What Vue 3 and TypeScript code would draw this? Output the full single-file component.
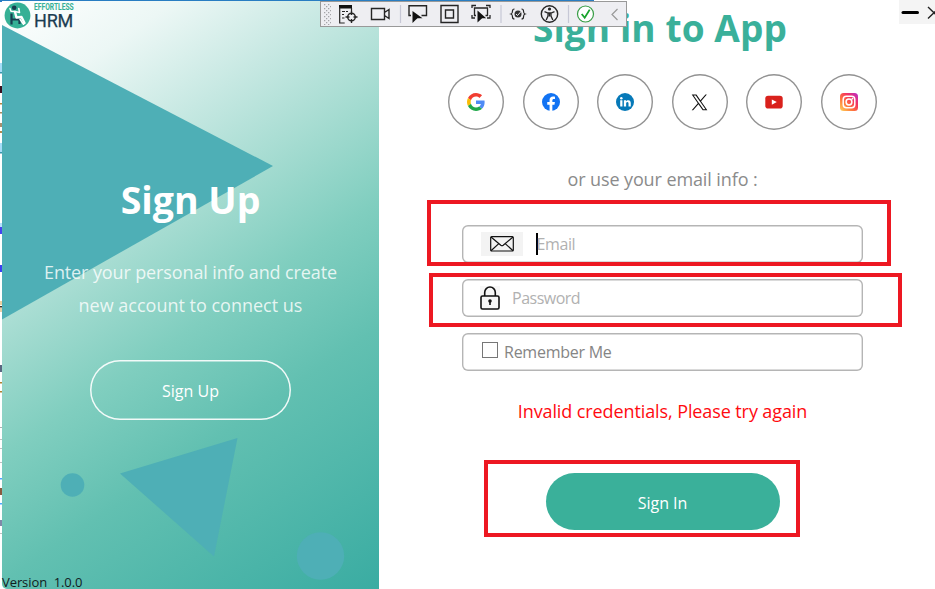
<script setup lang="ts">
import { ref } from 'vue'

interface Mark { y: number; h: number; c: string }

const socials = ['google', 'facebook', 'linkedin', 'x', 'youtube', 'instagram'] as const
const email = ref('')
const password = ref('')
const remember = ref(false)

// Sliver of the window that lies behind the app, left of the panel
const marks: Mark[] = [
  { y: 0, h: 2, c: '#2b7cc4' }, { y: 63, h: 9, c: '#a5dcf8' }, { y: 72, h: 1.5, c: '#3a96ae' },
  { y: 86, h: 7, c: '#3a1020' }, { y: 103, h: 1.5, c: '#b58540' }, { y: 112, h: 1.5, c: '#a88a60' },
  { y: 123, h: 4, c: '#a89070' }, { y: 131, h: 2, c: '#b08a50' }, { y: 143, h: 9, c: '#a5dcf8' },
  { y: 152, h: 1.5, c: '#3a96ae' }, { y: 223, h: 4, c: '#b5e0ff' }, { y: 227, h: 7, c: '#4545ee' },
  { y: 265, h: 7, c: '#3a40f0' }, { y: 301, h: 4, c: '#f0d0a0' }, { y: 306, h: 1.5, c: '#403020' },
  { y: 308, h: 4, c: '#e8cfa8' }, { y: 365, h: 7, c: '#5a6680' }, { y: 382, h: 1.5, c: '#b08030' },
  { y: 391, h: 1.5, c: '#b08030' }, { y: 427, h: 1, c: '#b0b0b0' }, { y: 439, h: 1, c: '#c0c0c0' },
  { y: 448, h: 1, c: '#c0c0c0' }, { y: 462, h: 1, c: '#c0c0c0' }, { y: 478, h: 1.5, c: '#4fa6ff' },
  { y: 488, h: 7, c: '#8a5a40' }, { y: 503, h: 1.5, c: '#4fa6ff' }, { y: 520, h: 6, c: '#8088a8' },
  { y: 533, h: 1, c: '#c0c0c0' },
]
</script>

<template>
  <div class="window">
    <svg class="behind" width="2" height="589" viewBox="0 0 2 589">
      <rect v-for="m in marks" :key="m.y" x="0" :y="m.y" width="2" :height="m.h" :fill="m.c" />
    </svg>

    <section class="welcome">
      <svg class="shapes" width="377" height="588" viewBox="2 1 377 588">
        <g fill="#4eafb6">
          <path d="M2 25 273 166 2 319.500Z" />
          <path d="M120 473.500 237.500 438 214 556.500Z" />
          <circle cx="72.500" cy="485" r="11.800" />
          <circle cx="320.500" cy="556" r="23.700" />
        </g>
      </svg>
      <header class="brand">
        <svg width="27" height="27" viewBox="0 0 27 27">
          <circle cx="13.500" cy="13.500" r="12.900" fill="#35b095" />
          <circle cx="10.200" cy="5.800" r="2.300" fill="#183e50" />
          <path d="M7.500 11.500v11M7.500 17.500h8V22" fill="none" stroke="#183e50" stroke-width="2.200" />
          <path d="M11 10 12.500 15.500 17.500 15 20.500 21" fill="none" stroke="#fff" stroke-width="2.400" stroke-linecap="round" stroke-linejoin="round" />
          <path d="M6 6.500 7 9.300 11 9.500 15.500 10.500 14.800 6.500M16 17.300l3.500 5" fill="none" stroke="#fff" stroke-width="1.500" stroke-linecap="round" stroke-linejoin="round" />
        </svg>
        <div class="brand-name">
          <span class="brand-top">EFFORTLESS</span>
          <span class="brand-main">HRM</span>
        </div>
      </header>
      <div class="welcome-body">
        <h2>Sign Up</h2>
        <p><span class="line1">Enter your personal info and create</span><br /><span class="line2">new account to connect us</span></p>
        <button class="outline" type="button"><span>Sign Up</span></button>
      </div>
      <footer>Version&nbsp; 1.0.0</footer>
    </section>

    <main class="signin">
      <h1><span>Sign in to App</span></h1>
      <div class="socials">
        <button v-for="s in socials" :key="s" class="social" type="button">
          <svg v-if="s === 'google'" width="18" height="18" viewBox="0 0 48 48">
            <path fill="#f13d31" d="M24 9.500c3.540 0 6.710 1.220 9.210 3.600l6.850-6.850C35.900 2.380 30.470 0 24 0 14.620 0 6.510 5.380 2.560 13.220l7.980 6.190C12.430 13.720 17.740 9.500 24 9.500z" />
            <path fill="#4f8bf5" d="M46.980 24.550c0-1.570-.15-3.090-.38-4.550H24v9.020h12.940c-.58 2.960-2.260 5.480-4.780 7.180l7.730 6c4.510-4.180 7.090-10.360 7.090-17.650z" />
            <path fill="#fbbc05" d="M10.530 28.590c-.48-1.450-.76-2.990-.76-4.590s.27-3.140.76-4.590l-7.980-6.190C.92 16.460 0 20.120 0 24c0 3.880.92 7.540 2.560 10.780l7.970-6.190z" />
            <path fill="#20a84a" d="M24 48c6.480 0 11.930-2.130 15.890-5.810l-7.730-6c-2.150 1.450-4.920 2.300-8.160 2.300-6.260 0-11.570-4.220-13.470-9.910l-7.980 6.190C6.510 42.620 14.620 48 24 48z" />
          </svg>
          <svg v-else-if="s === 'facebook'" width="18" height="18" viewBox="0 0 24 24">
            <circle cx="12" cy="12" r="12" fill="#1273f3" />
            <path fill="#fff" d="M10.100 23.850v-8.300H7V12h3.100V9.400c0-3.100 1.800-4.700 4.600-4.700 1.300 0 2.600.24 2.600.24v3h-1.500c-1.500 0-2 .95-2 1.900V12h3.400l-.55 3.550h-2.850v8.300z" />
          </svg>
          <svg v-else-if="s === 'linkedin'" width="18" height="18" viewBox="0 0 24 24">
            <circle cx="12" cy="12" r="12" fill="#0679b8" />
            <circle cx="7.100" cy="6.900" r="1.700" fill="#fff" />
            <path fill="#fff" d="M5.600 9.700h3v8.400h-3zM10.500 9.700h2.900v1.300c.5-.9 1.500-1.500 2.900-1.500 2.800 0 3.400 1.800 3.400 4.200v4.400h-3v-3.900c0-1.200-.2-2.200-1.500-2.200s-1.700 1-1.700 2.200v3.900h-3z" />
          </svg>
          <svg v-else-if="s === 'x'" width="17" height="17" viewBox="0 0 24 24">
            <path fill="#111" d="M14.200 10.200 22.400.8h-2l-7.100 8.100L7.700.8H1l8.600 12.300L1 23h2l7.500-8.600 6 8.600h6.600zM11.500 13.200l-.9-1.200L3.700 2.200h3l5.600 7.900.9 1.200 7.200 10.200h-3z" />
          </svg>
          <svg v-else-if="s === 'youtube'" width="18" height="14" viewBox="0 0 18 14">
            <rect x="0.300" y="0.700" width="17.400" height="12.900" rx="2.800" fill="#d9211c" />
            <path fill="#fff" d="M6.800 4.500v5.200l5-2.600z" />
          </svg>
          <svg v-else width="18" height="18" viewBox="0 0 18 18">
            <defs>
              <linearGradient id="ig" x1="0" y1="1" x2="1" y2="0">
                <stop offset="0" stop-color="#ffd65c" /><stop offset=".35" stop-color="#ff7a3c" />
                <stop offset=".65" stop-color="#f5355c" /><stop offset="1" stop-color="#b52bd0" />
              </linearGradient>
            </defs>
            <rect width="18" height="18" rx="3.500" fill="url(#ig)" />
            <g fill="none" stroke="#fff" stroke-width="1.500">
              <rect x="3.200" y="3.200" width="11.600" height="11.600" rx="3.200" /><circle cx="9" cy="9" r="2.900" />
            </g>
            <circle cx="12.400" cy="5.700" r=".9" fill="#fff" />
          </svg>
        </button>
      </div>
      <p class="hint"><span>or use your email info :</span></p>
      <form class="fields" @submit.prevent>
        <label class="field">
          <span class="mail"><svg width="24" height="16" viewBox="0 0 24 16" fill="none" stroke="#111" stroke-width="1.200"><rect x=".7" y=".7" width="22.600" height="14.300" rx="1" /><path d="m1 1 9.800 8.300q1.200.9 2.400 0L23 1M1 14.800l7.800-7.200M23 14.800l-7.800-7.200" /></svg></span>
          <span class="caret"></span>
          <input v-model="email" class="in-email" type="text" placeholder="Email" />
        </label>
        <label class="field">
          <svg class="lock" width="20" height="24" viewBox="0 0 20 24" fill="none" stroke="#111" stroke-width="1.600"><rect x="1" y="10" width="18" height="13" rx="1.500" /><path d="M4.700 10V6.500a5.300 5.500 0 0 1 10.600 0V10M10 15.500V19" /><circle cx="10" cy="15" r="1" fill="#111" /></svg>
          <input v-model="password" class="in-pass" type="password" placeholder="Password" />
        </label>
        <label class="field remember">
          <input v-model="remember" type="checkbox" />
          <span>Remember Me</span>
        </label>
        <p class="error"><span>Invalid credentials, Please try again</span></p>
        <button class="submit" type="submit"><span>Sign In</span></button>
      </form>
    </main>

    <div class="top-edge"></div>
    <div class="controls">
      <svg width="36" height="24" viewBox="0 0 36 24"><path d="M4 12.500h14.500" stroke="#000" stroke-width="3" stroke-linecap="round" /><path d="m29 7 12 11.500M29 18.500 41 7" stroke="#222" stroke-width="1.400" /></svg>
    </div>

    <div class="toolbar">
      <svg width="304" height="24" viewBox="321 2 304 24" fill="none" stroke="#252525" stroke-width="1.400">
        <defs><pattern id="grip" x="324" y="4" width="4" height="4" patternUnits="userSpaceOnUse"><path d="M0 0h1.300v1.300H0zM2 2h1.300v1.300H2z" fill="#a4a4a8" stroke="none" /></pattern></defs>
        <rect x="324" y="4" width="7" height="21" fill="url(#grip)" stroke="none" />
        <path d="M339 5h13v3.500h-13z" fill="#111" stroke="none" />
        <path d="M339.700 7v16h5M351.500 8v3M342 11.500h3M342 14.500h2M342 18h2.500M346 11.500h2" stroke-width="1.200" />
        <circle cx="351.500" cy="17" r="3.800" /><path d="M351.500 11v4M351.500 19v4M345.500 17h4M353.500 17h4" />
        <path d="M371.500 8.500h13v11h-13zM384.500 12.500l4.500-3v9l-4.500-3" />
        <path d="M400.500 5v18M501 5v18M568.500 5v18" stroke="#c7c8d6" stroke-width="1.200" />
        <path d="M411 15.500h-2V5.700h17.500v9.800h-5" />
        <path d="M412.500 11v12l3-3 2-1.800 5 .1z" fill="#111" stroke="none" />
        <path d="M441 5.500h17V22.500h-17zM445.500 10h8v8h-8z" />
        <path d="M472 8V5.500h4M486 5.500h4V8M490 15v3h-3M475 18h-3v-3M476 15.500h-1.500V8h13v7.500h-2" stroke-width="1.300" />
        <path d="M477.500 10.500V22.500l3.200-3 1.500-1.300 4 .1z" fill="#111" stroke="none" />
        <path d="M514.500 9c-2 0-2 .6-2 2s0 2.500-1.500 3c1.500.5 1.500 1.600 1.500 3s0 2 2 2M521.500 9c2 0 2 .6 2 2s0 2.500 1.500 3c-1.500.5-1.500 1.600-1.500 3s0 2-2 2" stroke-width="1.200" />
        <circle cx="518" cy="14" r="3.500" fill="#333" stroke="none" /><path d="m516 14 1.500 1.500 4-4.500" stroke="#eeeef2" stroke-width="1" />
        <circle cx="549.500" cy="14" r="8.200" /><circle cx="549.500" cy="9" r="1.600" fill="#222" stroke="none" />
        <path d="M544.500 11.700 548 13h3l3.500-1.300M549.500 13v3.500M548 13v3l-1.800 4M551 13v3l1.800 4" stroke-width="1.300" />
        <circle cx="585.500" cy="14" r="8" fill="#fff" stroke="#379d45" stroke-width="1.200" /><path d="m581.700 14 3 3.800 5-8.200" stroke="#18a32c" stroke-width="1.800" />
        <path d="m617.500 9-5.500 5.500 5.500 5.500" stroke="#999" stroke-width="1.200" />
      </svg>
    </div>

    <div class="callout callout-email"></div>
    <div class="callout callout-password"></div>
    <div class="callout callout-submit"></div>
  </div>
</template>

<style>
body { margin: 0; background: #fff; overflow: hidden; }
</style>

<style scoped>
* { box-sizing: border-box; }
.window { position: relative; display: flex; width: 935px; height: 589px; overflow: hidden; background: #fff; font-family: "Open Sans", "Noto Sans", sans-serif; }
h1, h2, p { margin: 0; }
button { font-family: inherit; padding: 0; background: none; }
h1 span, .hint span, .error span, button span { white-space: nowrap; }
.behind { flex: none; }
.welcome { position: relative; display: flex; flex-direction: column; width: 377px; flex: none; margin-top: 1px; color: #fff; background: linear-gradient(146deg, #fff 0%, #ecf7f5 14%, #c6e8e2 28%, #a3dbd0 41%, #80cebf 54%, #62c0b1 69%, #3aaca2 100%); border-bottom-left-radius: 5px; }
.shapes { position: absolute; inset: 0; }
.brand { position: relative; display: flex; align-items: flex-start; gap: 3px; height: 29px; padding: 1px 0 0 2px; }
.brand-name { display: flex; flex-direction: column; padding-top: 1px; }
.brand-top { width: 52px; height: 9px; font: 700 8.500px/9px Roboto, sans-serif; color: #35b095; white-space: nowrap; transform: scaleX(.79); transform-origin: left; }
.brand-main { height: 16px; font: 400 18px/17px Roboto, sans-serif; color: #1c3d52; letter-spacing: -.2px; -webkit-text-stroke: .25px #1c3d52; }
.welcome-body { position: relative; flex: 1; display: flex; flex-direction: column; align-items: center; padding-top: 144px; }
h2 { font-size: 37.500px; line-height: 52px; font-weight: 700; }
.welcome-body p { margin-top: 30px; text-align: center; font-size: 18px; line-height: 33px; color: rgba(255, 255, 255, .82); white-space: nowrap; }
.line1 { letter-spacing: -.12px; }
.outline { width: 201px; height: 60px; margin-top: 38px; padding-top: 2px; box-shadow: inset 0 0 0 1.500px rgba(255, 255, 255, .9); border: 0; border-radius: 30px; color: #fff; font-size: 16px; }
footer { position: relative; height: 17px; line-height: 18px; margin-bottom: -1px; font-size: 13px; letter-spacing: -.08px; color: #10201e; white-space: nowrap; }
.signin { flex: 1; display: flex; flex-direction: column; align-items: center; padding: 2px 0 0 11px; }
h1 { height: 52px; margin-right: 5px; font-size: 37px; line-height: 52px; letter-spacing: .1px; color: #3ab09a; }
.socials { display: flex; gap: 18.500px; margin-top: 20px; }
.social { display: flex; align-items: center; justify-content: center; width: 56px; height: 56px; border: 0; box-shadow: inset 0 0 0 1.400px #929292; border-radius: 50%; }
.hint { margin-top: 36px; height: 26px; font-size: 18px; line-height: 26px; letter-spacing: -.1px; color: #8b8b8b; }
.fields { display: flex; flex-direction: column; align-items: center; gap: 16px; margin-top: 33px; }
.field { display: flex; align-items: center; width: 401px; height: 38px; padding-left: 19px; border: 0; box-shadow: inset 0 0 0 1.400px #b5b5b5; border-radius: 6px; }
.mail { display: flex; align-items: center; justify-content: center; width: 42px; height: 24px; background: #f3f3f3; }
.caret { width: 1.500px; height: 22px; margin-left: 13px; background: #000; }
.field input[type="text"], .field input[type="password"] { flex: 1; min-width: 0; padding: 0; border: 0; outline: 0; background: none; font: 16px/24px "Open Sans", sans-serif; }
.field input::placeholder { color: #b1b1b1; opacity: 1; }
.field .in-email { margin-left: -1px; letter-spacing: -.4px; }
.lock { margin-left: -1px; background: #f7f7f7; }
.field .in-pass { margin-left: 12px; letter-spacing: -.5px; }
.remember { padding-bottom: 1px; font-size: 16px; letter-spacing: -.25px; color: #858585; }
.remember input { appearance: none; width: 16px; height: 16px; margin: -4px 6px 0 1px; border: 1.300px solid #777; }
.error { height: 26px; margin-top: 11px; font-size: 18px; line-height: 26px; letter-spacing: -.1px; color: #ff0a10; }
.submit { width: 234px; height: 57px; margin-top: 33px; padding-top: 3px; border: 0; border-radius: 29px; background: #3ab09a; color: #fff; font-size: 16px; }
.top-edge { position: absolute; top: 0; left: 0; width: 594px; height: 1px; background: #287dc2; }
.controls { position: absolute; left: 899px; top: 0; width: 36px; height: 24px; background: #f4f4f4; overflow: hidden; }
.toolbar { position: absolute; left: 320px; top: 1px; width: 307px; height: 26px; border: 1px solid #999; background: #eeeef2; }
.toolbar svg { display: block; }
.callout { position: absolute; border: 4px solid #ed1822; pointer-events: none; }
.callout-email { left: 427px; top: 200px; width: 464px; height: 66px; }
.callout-password { left: 429px; top: 273px; width: 473px; height: 54px; }
.callout-submit { left: 484px; top: 460px; width: 316px; height: 77px; }
</style>
